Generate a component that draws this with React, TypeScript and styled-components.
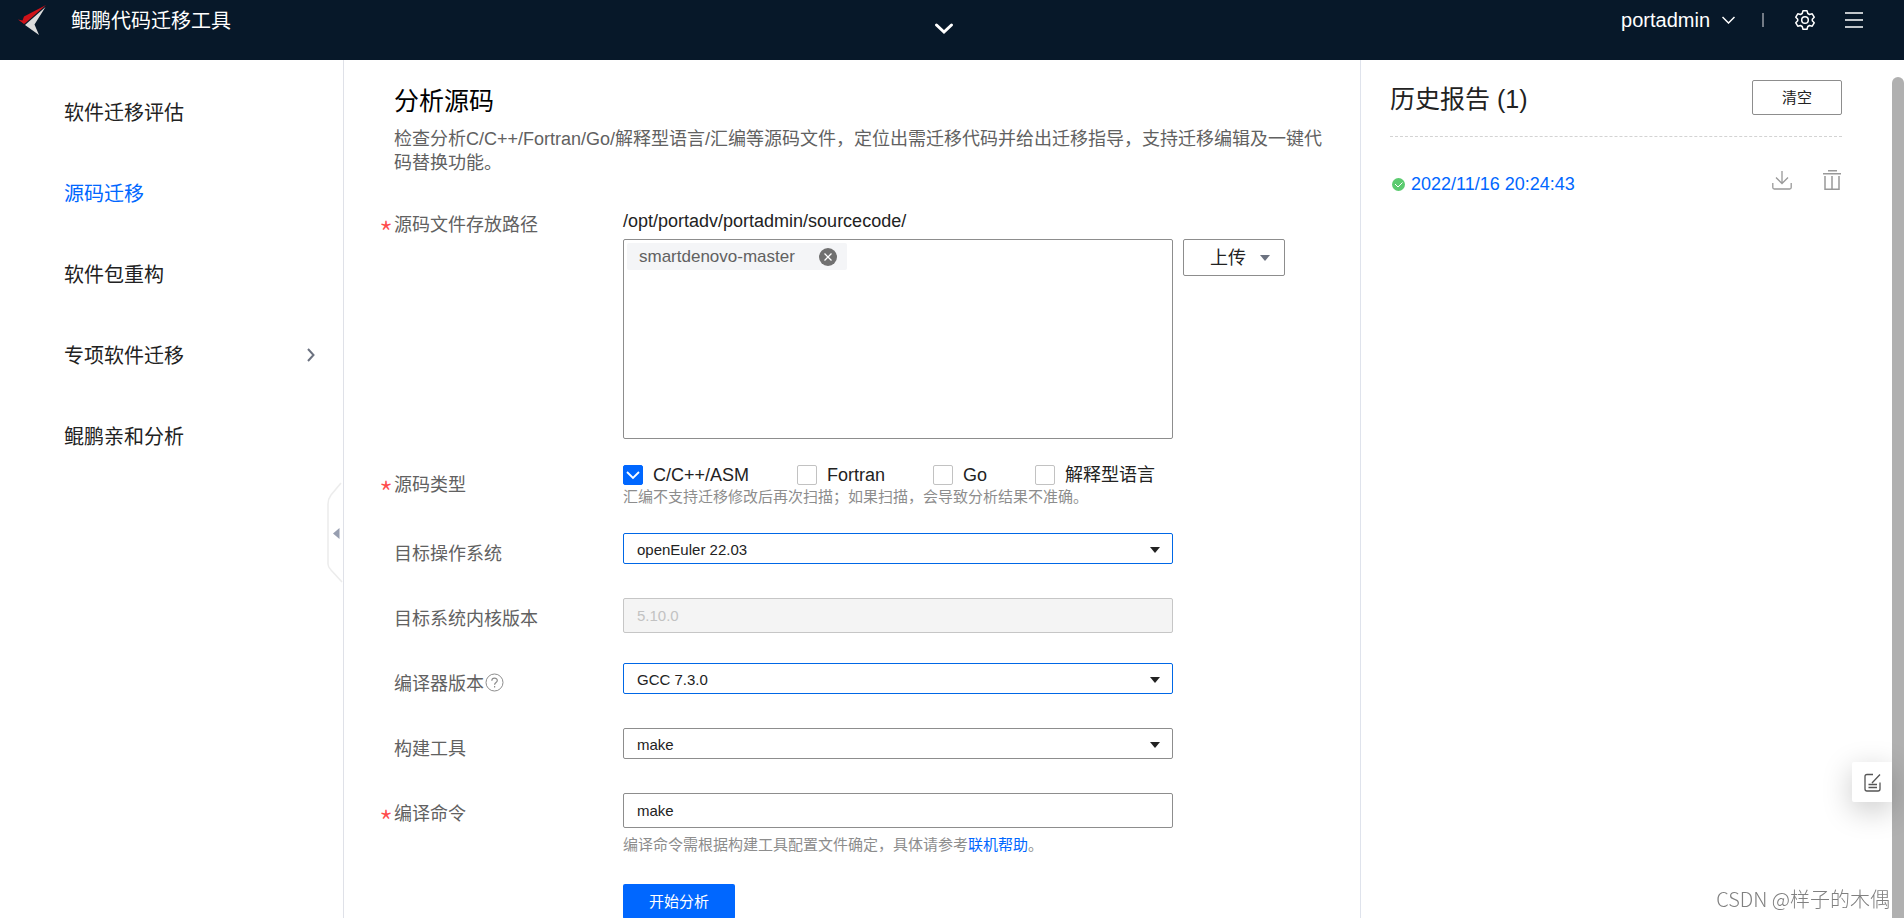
import React, { useState } from 'react';
import styled, { createGlobalStyle } from 'styled-components';

const GlobalStyle = createGlobalStyle`
  *, *::before, *::after { box-sizing: border-box; }
  body {
    margin: 0;
    background: #fff;
    color: #222;
    font-family: "Liberation Sans", "Noto Sans CJK SC", sans-serif;
    font-size: 18px;
    font-weight: 400;
  }
  button, input, select { font: inherit; color: inherit; }
  button { padding: 0; border: 0; background: none; cursor: pointer; }
  svg { display: block; flex: none; }
`;

const Page = styled.div`
  display: flex;
  flex-direction: column;
  height: 100vh;
  overflow: hidden;
`;

const Header = styled.header`
  display: grid;
  grid-template-columns: 1fr auto 1fr;
  flex: none;
  height: 60px;
  padding: 0 33px 0 17px;
  background: #071829;
  color: #fff;
`;

const Brand = styled.div`
  display: flex;
  align-items: center;
  gap: 25px;
  height: 40px;
  font-size: 20px;
`;

const BrandName = styled.span`
  padding-bottom: 2px;
`;

const Expand = styled.button`
  height: 20px;
  margin-top: 18px;
`;

const Tools = styled.div`
  display: flex;
  justify-content: flex-end;
  align-items: center;
  height: 40px;
  padding-right: 8px;
  font-size: 20px;
`;

const UserButton = styled.button`
  display: flex;
  align-items: center;
  gap: 12px;
`;

const Divider = styled.span`
  width: 2px;
  height: 14px;
  margin: 0 31px 0 27px;
  background: #737b86;
`;

const IconButton = styled.button<{ $before?: number }>`
  margin-left: ${(p) => p.$before ?? 0}px;
`;

const Body = styled.div`
  display: flex;
  flex: 1;
  min-height: 0;
`;

const Sidebar = styled.nav`
  position: relative;
  flex: none;
  width: 344px;
  padding: 11px 28px 0 64px;
  border-right: 1px solid #dfe1e8;
`;

const NavItem = styled.a<{ $active?: boolean }>`
  display: flex;
  align-items: center;
  justify-content: space-between;
  height: 81px;
  font-size: 20px;
  text-decoration: none;
  color: ${(p) => (p.$active ? '#0067ff' : '#222')};
`;

const Collapse = styled.button`
  position: absolute;
  right: 0;
  top: 416px;
`;

const Main = styled.main`
  flex: 1;
  min-width: 0;
  padding: 22px 24px 0 35px;
`;

const Intro = styled.section`
  max-width: 955px;
  padding-left: 15px;
  color: #616161;
  line-height: 24px;
`;

const Title = styled.h1`
  margin: 0;
  font-size: 25px;
  font-weight: 400;
  line-height: 38px;
  color: #000;
`;

const Description = styled.p`
  margin: 7px 0 29px;
`;

const Form = styled.form`
  display: grid;
  gap: 25px;
`;

const Row = styled.div`
  display: grid;
  grid-template-columns: 244px minmax(0, 672px);
  min-height: 40px;
`;

const LabelCell = styled.div`
  display: flex;
  align-items: center;
  height: 38px;
  color: #616161;
`;

const Required = styled.span`
  width: 15px;
  padding-top: 18px;
  font-family: "Noto Sans CJK SC", sans-serif;
  font-size: 32px;
  font-weight: 300;
  line-height: 32px;
  color: #ff4b4b;
`;

const Field = styled.div`
  max-width: 550px;
`;

const Path = styled.div`
  line-height: 35px;
`;

const UploadLine = styled.div`
  display: flex;
  align-items: flex-start;
  gap: 10px;
`;

const FileBox = styled.div`
  flex: 1;
  max-width: 550px;
  height: 200px;
  padding: 3px;
  border: 1px solid #8d8d8d;
  border-radius: 2px;
`;

const Tag = styled.span`
  display: inline-flex;
  align-items: center;
  justify-content: space-between;
  width: 220px;
  height: 27px;
  padding: 0 10px 0 12px;
  border-radius: 2px;
  background: #f4f5f7;
  color: #616161;
  font-size: 17px;
`;

const Upload = styled.button`
  display: flex;
  align-items: center;
  gap: 14px;
  width: 102px;
  height: 37px;
  padding: 0 0 3px 26px;
  border: 1px solid #8d8d8d;
  border-radius: 2px;
  svg { margin-top: 3px; }
`;

const Checks = styled.div`
  display: flex;
  gap: 48px;
  height: 22px;
`;

const CheckLabel = styled.label`
  display: flex;
  align-items: center;
  gap: 10px;
  line-height: 20px;
  white-space: nowrap;
`;

const CheckBox = styled.input`
  appearance: none;
  width: 20px;
  height: 20px;
  margin: 0;
  border: 1px solid #c2c2c2;
  border-radius: 2px;
  background: #fff;
  &:checked { border-color: #0067ff; background: #0067ff; }
`;

const CheckWrap = styled.span`
  display: grid;
  > * { grid-area: 1 / 1; place-self: center; }
  svg { pointer-events: none; }
`;

const Hint = styled.div`
  line-height: 22px;
  font-size: 15px;
  color: #8d8d8d;
`;

const HintLink = styled.a`
  color: #0067ff;
  text-decoration: none;
`;

const SelectWrap = styled.div`
  display: grid;
  align-items: center;
  > * { grid-area: 1 / 1; }
  svg { justify-self: end; margin: 3px 13px 0 0; pointer-events: none; }
`;

const Select = styled.select<{ $active?: boolean }>`
  appearance: none;
  width: 100%;
  height: 31px;
  padding: 1px 30px 0 13px;
  border: 1px solid ${(p) => (p.$active ? '#0067e6' : '#8d8d8d')};
  border-radius: 2px;
  outline: none;
  background: #fff;
  font-size: 15px;
`;

const TextInput = styled.input`
  display: block;
  width: 100%;
  height: 35px;
  padding: 0 13px;
  border: 1px solid #8d8d8d;
  border-radius: 2px;
  font-size: 15px;
  &:disabled { border-color: #c6c6c6; background: #f4f4f4; color: #c2c2c2; }
`;

const InputHint = styled(Hint)`
  padding: 6px 0 3px;
`;

const Submit = styled.button`
  grid-column: 2;
  width: 112px;
  height: 35px;
  padding-bottom: 3px;
  border-radius: 2px;
  background: #0067ff;
  color: #fff;
  font-size: 15px;
`;

const History = styled.aside`
  flex: none;
  width: 532px;
  padding: 20px 50px 0 29px;
  border-left: 1px solid #dfe3ec;
`;

const HistoryHead = styled.div`
  display: flex;
  align-items: center;
  justify-content: space-between;
  height: 57px;
  padding-bottom: 21px;
  border-bottom: 1px dashed #d3d3d3;
`;

const HistoryTitle = styled.h2`
  margin: 0;
  padding-bottom: 2px;
  font-size: 25px;
  font-weight: 400;
`;

const Clear = styled.button`
  width: 90px;
  height: 35px;
  padding-bottom: 2px;
  border: 1px solid #8d8d8d;
  border-radius: 2px;
  font-size: 15px;
`;

const Report = styled.div`
  display: flex;
  align-items: flex-start;
  gap: 31px;
  margin-top: 33px;
  padding-right: 1px;
`;

const ReportLink = styled.a`
  display: flex;
  align-items: center;
  gap: 6px;
  flex: 1;
  padding: 4px 0 0 2px;
  line-height: 20px;
  color: #0067ff;
  text-decoration: none;
`;

const ScrollRail = styled.div`
  flex: none;
  width: 12px;
  margin-top: 17px;
  border-radius: 6px 6px 0 0;
  background: #b0b0b0;
`;

const Feedback = styled.button`
  position: fixed;
  right: 12px;
  bottom: 116px;
  display: grid;
  place-items: center;
  width: 40px;
  height: 40px;
  border-radius: 2px 0 0 2px;
  background: #fff;
  box-shadow: 0 8px 30px rgba(0, 0, 0, 0.22);
`;

const Watermark = styled.div`
  position: fixed;
  right: 14px;
  bottom: 4px;
  font-family: "Noto Sans CJK SC", sans-serif;
  font-size: 20px;
  font-weight: 300;
  line-height: 30px;
  color: #808080;
`;

const Caret = ({ color = '#222' }: { color?: string }) => (
  <svg width="10" height="6" viewBox="0 0 10 6" aria-hidden="true">
    <path d="M0 0h10L5 6z" fill={color} />
  </svg>
);

const Logo = () => (
  <svg width="29" height="30" viewBox="0 0 29 30" aria-hidden="true">
    <path d="M29 0 7 11.500 5.500 15.500 1 14.500l6 4.500 1.500-1z" fill="#cf1219" />
    <path d="M28.500 2 8 20l14 10-4.500-10.500z" fill="#dcdcdc" />
  </svg>
);

const checkTypes = ['C/C++/ASM', 'Fortran', 'Go', '解释型语言'];

const FormLabel = ({ text, id, required, help }: { text: string; id?: string; required?: boolean; help?: boolean }) => (
  <LabelCell>
    <Required>{required ? '*' : ''}</Required>
    <label htmlFor={id}>{text}</label>
    {help && (
      <svg width="20" height="20" viewBox="0 0 20 20" fill="none" stroke="#8d8d8d" aria-hidden="true">
        <circle cx="10.500" cy="10.500" r="8.500" />
        <path d="M7.800 8.800c0-3.600 5.500-3.500 5.500-.3 0 2-2.700 2-2.700 4.200M10.600 14v1.500" strokeWidth="1.200" />
      </svg>
    )}
  </LabelCell>
);

const SelectField = ({ id, value, active }: { id: string; value: string; active?: boolean }) => (
  <Field>
    <SelectWrap>
      <Select id={id} $active={active} defaultValue={value}>
        <option>{value}</option>
      </Select>
      <Caret />
    </SelectWrap>
  </Field>
);

export default function App() {
  const [checked, setChecked] = useState<string[]>(['C/C++/ASM']);
  const [command, setCommand] = useState('make');
  const toggle = (type: string) =>
    setChecked((list) => (list.includes(type) ? list.filter((t) => t !== type) : [...list, type]));

  return (
    <Page>
      <GlobalStyle />
      <Header>
        <Brand>
          <Logo />
          <BrandName>鲲鹏代码迁移工具</BrandName>
        </Brand>
        <Expand aria-label="展开">
          <svg width="20" height="20" viewBox="0 0 20 20" fill="none" stroke="#fff" strokeWidth="3" strokeLinecap="round">
            <path d="m2.500 7 7.500 7 7.500-7" />
          </svg>
        </Expand>
        <Tools>
          <UserButton>
            <span>portadmin</span>
            <svg width="13" height="8" viewBox="0 0 13 8" fill="none" stroke="#fff" strokeWidth="1.500">
              <path d="m.5 1 6 6 6-6" />
            </svg>
          </UserButton>
          <Divider />
          <IconButton aria-label="设置">
            <svg width="20" height="20" viewBox="0 0 20 20" fill="none" stroke="#fff" strokeWidth="1.500" strokeLinejoin="round">
              <path d="M8 .8h4l.8 2.700 1.700 1 2.700-.7 2 3.400-1.900 2v1.600l1.900 2-2 3.400-2.700-.7-1.700 1-.8 2.700H8l-.8-2.700-1.700-1-2.700.7-2-3.400 1.900-2V9.200l-1.900-2 2-3.400 2.700.7 1.700-1z" />
              <circle cx="10" cy="10" r="3.300" />
            </svg>
          </IconButton>
          <IconButton $before={30} aria-label="菜单">
            <svg width="18" height="16" viewBox="0 0 18 16" stroke="#fff" strokeWidth="1.300">
              <path d="M0 1h18M0 8h18M0 15h18" />
            </svg>
          </IconButton>
        </Tools>
      </Header>

      <Body>
        <Sidebar>
          <NavItem href="#assess">软件迁移评估</NavItem>
          <NavItem href="#source" $active>源码迁移</NavItem>
          <NavItem href="#package">软件包重构</NavItem>
          <NavItem href="#special">
            专项软件迁移
            <svg width="8" height="14" viewBox="0 0 8 14" fill="none" stroke="#6c7280" strokeWidth="2">
              <path d="m1 1 5.500 6L1 13" />
            </svg>
          </NavItem>
          <NavItem href="#affinity">鲲鹏亲和分析</NavItem>
          <Collapse aria-label="收起">
            <svg width="18" height="114" viewBox="0 0 18 114">
              <path
                d="M16 7 6 19Q3 23 3 28v60q0 3 3 6l11 12"
                fill="#fff"
                stroke="#ececec"
                strokeWidth="1.500"
              />
              <path d="M14.500 52v11L8 57.500z" fill="#979eb0" />
            </svg>
          </Collapse>
        </Sidebar>

        <Main>
          <Intro>
            <Title>分析源码</Title>
            <Description>
              检查分析C/C++/Fortran/Go/解释型语言/汇编等源码文件，定位出需迁移代码并给出迁移指导，支持迁移编辑及一键代码替换功能。
            </Description>
          </Intro>
          <Form onSubmit={(e) => e.preventDefault()}>
            <Row>
              <FormLabel text="源码文件存放路径" required />
              <div>
                <Path>/opt/portadv/portadmin/sourcecode/</Path>
                <UploadLine>
                  <FileBox>
                    <Tag>
                      smartdenovo-master
                      <IconButton type="button" aria-label="移除">
                        <svg width="18" height="18" viewBox="0 0 18 18">
                          <circle cx="9" cy="9" r="9" fill="#707070" />
                          <path d="m5.500 5.500 7 7m0-7-7 7" stroke="#fff" strokeWidth="1.300" />
                        </svg>
                      </IconButton>
                    </Tag>
                  </FileBox>
                  <Upload type="button">
                    上传
                    <Caret color="#6c7280" />
                  </Upload>
                </UploadLine>
              </div>
            </Row>
            <Row>
              <FormLabel text="源码类型" required />
              <div>
                <Checks>
                  {checkTypes.map((type) => (
                    <CheckLabel key={type}>
                      <CheckWrap>
                        <CheckBox type="checkbox" checked={checked.includes(type)} onChange={() => toggle(type)} />
                        {checked.includes(type) && (
                          <svg width="14" height="10" viewBox="0 0 14 10" fill="none" stroke="#fff" strokeWidth="1.800">
                            <path d="m1 2 6 6 6-6" />
                          </svg>
                        )}
                      </CheckWrap>
                      {type}
                    </CheckLabel>
                  ))}
                </Checks>
                <Hint>汇编不支持迁移修改后再次扫描；如果扫描，会导致分析结果不准确。</Hint>
              </div>
            </Row>
            <Row>
              <FormLabel text="目标操作系统" id="os" />
              <SelectField id="os" value="openEuler 22.03" active />
            </Row>
            <Row>
              <FormLabel text="目标系统内核版本" id="kernel" />
              <Field>
                <TextInput id="kernel" value="5.10.0" disabled />
              </Field>
            </Row>
            <Row>
              <FormLabel text="编译器版本" id="compiler" help />
              <SelectField id="compiler" value="GCC 7.3.0" active />
            </Row>
            <Row>
              <FormLabel text="构建工具" id="builder" />
              <SelectField id="builder" value="make" />
            </Row>
            <Row>
              <FormLabel text="编译命令" id="command" required />
              <Field>
                <TextInput id="command" value={command} onChange={(e) => setCommand(e.target.value)} />
                <InputHint>
                  编译命令需根据构建工具配置文件确定，具体请参考<HintLink href="#help">联机帮助</HintLink>。
                </InputHint>
              </Field>
            </Row>
            <Row>
              <Submit type="submit">开始分析</Submit>
            </Row>
          </Form>
        </Main>

        <History>
          <HistoryHead>
            <HistoryTitle>历史报告 (1)</HistoryTitle>
            <Clear>清空</Clear>
          </HistoryHead>
          <Report>
            <ReportLink href="#report">
              <svg width="13" height="13" viewBox="0 0 13 13">
                <circle cx="6.500" cy="6.500" r="6.500" fill="#5bcb6f" />
                <path d="m3 6 3 3 4.500-4.500" fill="none" stroke="#fff" />
              </svg>
              2022/11/16 20:24:43
            </ReportLink>
            <IconButton aria-label="下载">
              <svg width="20" height="20" viewBox="0 0 20 20" fill="none" stroke="#999" strokeWidth="1.300">
                <path d="M10 1v12M4 7.500l6 6 6-6M.8 13v4.500q0 1.500 1.500 1.500h15.400q1.500 0 1.500-1.500V13" />
              </svg>
            </IconButton>
            <IconButton aria-label="删除">
              <svg width="18" height="20" viewBox="0 0 18 20" fill="none" stroke="#999" strokeWidth="1.500">
                <path d="M5 .8h9M0 3.700h18M2 6v13.200h14V6M9 6v13" />
              </svg>
            </IconButton>
          </Report>
        </History>
        <ScrollRail />
      </Body>

      <Feedback aria-label="反馈">
        <svg width="17" height="19" viewBox="0 0 17 19" fill="none" stroke="#555" strokeWidth="1.300">
          <path d="M9 1.500H3q-2 0-2 2V16q0 2 2 2h11q2 0 2-2V9.500M16 1.500 8 10M4.500 11.500H13M4.500 14.500H13" />
        </svg>
      </Feedback>
      <Watermark>CSDN @样子的木偶</Watermark>
    </Page>
  );
}
